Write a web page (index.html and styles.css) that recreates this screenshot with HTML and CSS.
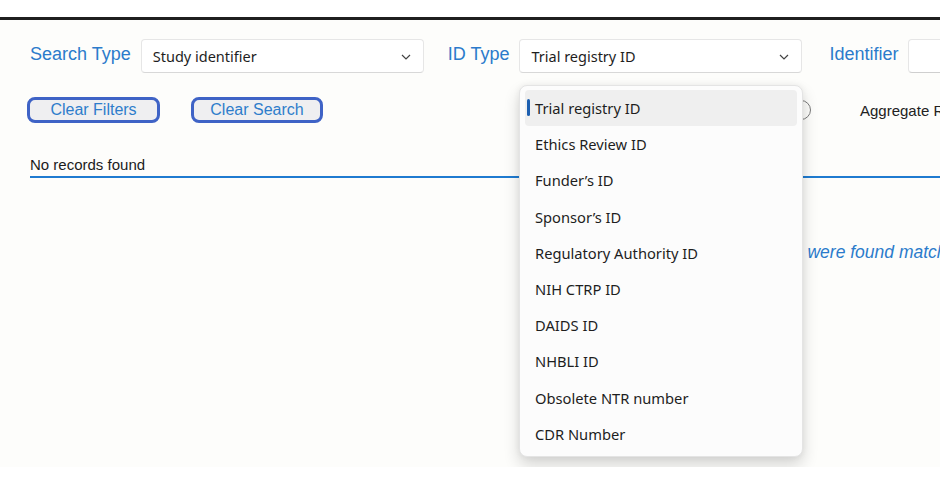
FILE: index.html
```html
<!DOCTYPE html>
<html>
<head>
<meta charset="utf-8">
<link rel="stylesheet" href="styles.css">
</head>
<body>
<div class="top-gap"></div>
<div class="page">
  <div class="search-row">
    <label class="field-label lbl-search">Search Type</label>
    <div class="select sel-1"><span>Study identifier</span><svg class="chev" width="10" height="6" viewBox="0 0 10 6"><path d="M1 1l4 4 4-4" fill="none" stroke="#444" stroke-width="1.2"/></svg></div>
    <label class="field-label lbl-id">ID Type</label>
    <div class="select sel-2"><span>Trial registry ID</span><svg class="chev" width="10" height="6" viewBox="0 0 10 6"><path d="M1 1l4 4 4-4" fill="none" stroke="#444" stroke-width="1.2"/></svg></div>
    <label class="field-label lbl-ident">Identifier</label>
    <div class="input"></div>
  </div>
  <div class="button-row">
    <button class="btn btn-filters">Clear Filters</button>
    <button class="btn btn-search">Clear Search</button>
    <span class="toggle"></span>
    <span class="aggregate">Aggregate Results</span>
  </div>
  <div class="results">
    <div class="results-head">No records found</div>
  </div>
  <div class="message">No records were found matching</div>

  <ul class="dropdown">
    <li class="opt active"><span class="bar"></span>Trial registry ID</li>
    <li class="opt">Ethics Review ID</li>
    <li class="opt">Funder’s ID</li>
    <li class="opt">Sponsor’s ID</li>
    <li class="opt">Regulatory Authority ID</li>
    <li class="opt">NIH CTRP ID</li>
    <li class="opt">DAIDS ID</li>
    <li class="opt">NHBLI ID</li>
    <li class="opt">Obsolete NTR number</li>
    <li class="opt">CDR Number</li>
  </ul>
</div>
</body>
</html>
```

FILE: styles.css
```css
html, body {
  margin: 0;
  padding: 0;
  background: #ffffff;
}
body {
  width: 940px;
  height: 489px;
  overflow: hidden;
  font-family: "Liberation Sans", Arial, sans-serif;
}
.top-gap {
  height: 17px;
}
.page {
  position: relative;
  border-top: 3px solid #1f1f1f;
  background: #fdfdfb;
  height: 447px;
  overflow: hidden;
}
.search-row {
  display: flex;
  align-items: center;
  padding: 19px 0 0 30px;
  height: 34px;
  white-space: nowrap;
}
.search-row > * { flex-shrink: 0; }
.field-label {
  color: #2b7bcb;
  font-size: 18px;
  margin-top: -3px;
}
.lbl-search { margin-right: 10px; }
.lbl-id { margin-left: 24px; margin-right: 10px; }
.lbl-ident { margin-left: 27px; margin-right: 10px; }
.select {
  box-sizing: border-box;
  width: 283px;
  height: 34px;
  background: #ffffff;
  border: 1px solid #e6e6e6;
  border-bottom-color: #d8d8d8;
  border-radius: 4px;
  display: flex;
  align-items: center;
  justify-content: space-between;
  padding: 0 12px 0 11px;
  font-family: "Noto Sans", "Open Sans", sans-serif;
  font-size: 14.5px;
  color: #1e1e1e;
}
.chev { margin-top: 1px; }
.input {
  box-sizing: border-box;
  width: 60px;
  height: 34px;
  background: #fff;
  border: 1px solid #e6e6e6;
  border-bottom-color: #cfcfcf;
  border-radius: 4px;
}
.button-row {
  display: flex;
  align-items: center;
  padding: 24px 0 0 27px;
  height: 26px;
  white-space: nowrap;
}
.button-row > * { flex-shrink: 0; }
.btn {
  box-sizing: border-box;
  height: 26px;
  border: 3px solid #3f63c6;
  border-radius: 8px;
  background: #efeff1;
  color: #2e7dcb;
  font-family: "Liberation Sans", Arial, sans-serif;
  font-size: 16px;
  padding: 0;
  line-height: 18px;
}
.btn-filters { width: 133px; }
.btn-search { width: 132px; margin-left: 31px; }
.toggle {
  box-sizing: border-box;
  width: 20px;
  height: 20px;
  border: 1.5px solid #7a7a7a;
  border-radius: 50%;
  margin-left: 468px;
}
.aggregate {
  margin-left: 49px;
  font-size: 15px;
  color: #222;
}
.results {
  padding: 33px 0 0 30px;
}
.results-head {
  font-size: 15px;
  color: #1b1b1b;
  padding-bottom: 3px;
  border-bottom: 2px solid #1f7bd0;
  line-height: 17px;
}
.message {
  margin: 64px 0 0 717px;
  font-size: 17.5px;
  font-style: italic;
  color: #2b7bcb;
  white-space: nowrap;
}
.dropdown {
  position: absolute;
  left: 519px;
  top: 65px;
  width: 284px;
  height: 372px;
  box-sizing: border-box;
  margin: 0;
  padding: 4px 5px;
  list-style: none;
  background: #fcfcfc;
  border: 1px solid #e4e4e4;
  border-radius: 8px;
  box-shadow: 0 8px 16px rgba(0,0,0,0.16), 0 0 6px rgba(0,0,0,0.06);
  font-family: "Noto Sans", "Open Sans", sans-serif;
  font-size: 14.7px;
  color: #1e1e1e;
}
.opt {
  position: relative;
  height: 36.2px;
  display: flex;
  align-items: center;
  padding-left: 10px;
  border-radius: 4px;
}
.opt.active {
  background: #efefef;
}
.bar {
  position: absolute;
  left: 2px;
  top: 9px;
  width: 3px;
  height: 17px;
  border-radius: 2px;
  background: #1d5fb0;
}
```
